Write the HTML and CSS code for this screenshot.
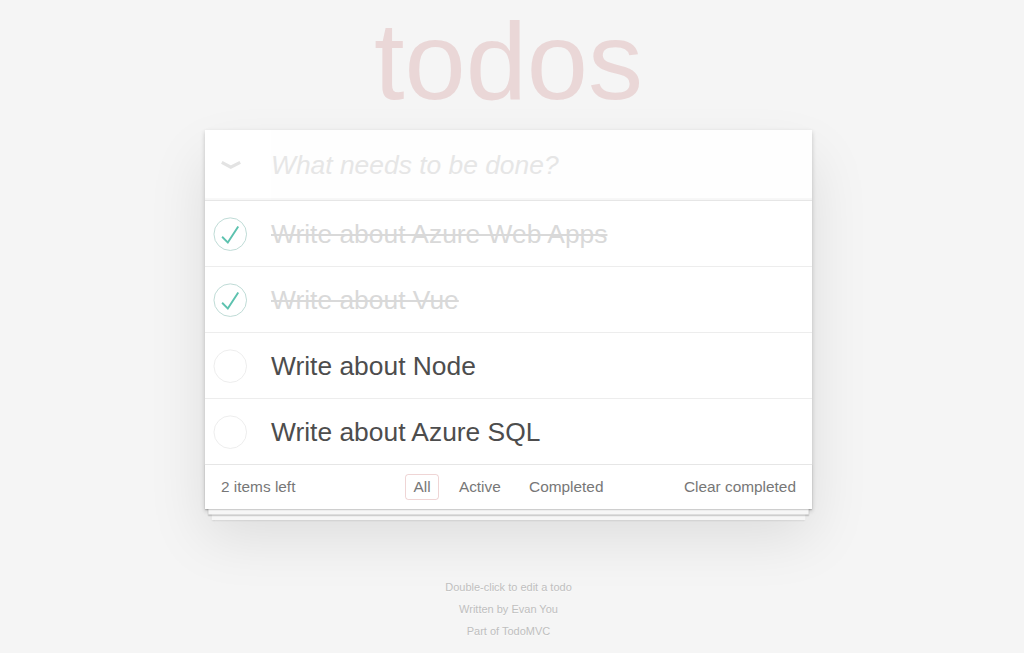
FILE: index.html
```html
<!DOCTYPE html>
<html lang="en">
<head>
<meta charset="utf-8">
<title>Vue.js • TodoMVC</title>
<link rel="stylesheet" href="styles.css">
</head>
<body>
<div class="page">
  <h1 class="title">todos</h1>
  <section class="todoapp">
    <header class="header">
      <label class="toggle-all" aria-label="Mark all as complete">
        <svg width="22" height="10" viewBox="0 0 22 10"><polyline points="1.8,2.4 10.8,7.2 20.2,2.4" fill="none" stroke="#e3e3e3" stroke-width="3.2"/></svg>
      </label>
      <input class="new-todo" placeholder="What needs to be done?" autocomplete="off">
    </header>
    <section class="main">
      <ul class="todo-list">
        <li class="todo completed">
          <span class="toggle"><svg width="44" height="44" viewBox="-10 -18 100 135"><circle cx="50" cy="50" r="50" fill="none" stroke="#bddad5" stroke-width="3"/><path fill="#5dc2af" d="M72 25L42 71 27 56l-4 4 20 20 34-52z"/></svg></span>
          <label class="todo-label">Write about Azure Web Apps</label>
        </li>
        <li class="todo completed">
          <span class="toggle"><svg width="44" height="44" viewBox="-10 -18 100 135"><circle cx="50" cy="50" r="50" fill="none" stroke="#bddad5" stroke-width="3"/><path fill="#5dc2af" d="M72 25L42 71 27 56l-4 4 20 20 34-52z"/></svg></span>
          <label class="todo-label">Write about Vue</label>
        </li>
        <li class="todo">
          <span class="toggle"><svg width="44" height="44" viewBox="-10 -18 100 135"><circle cx="50" cy="50" r="50" fill="none" stroke="#ededed" stroke-width="3"/></svg></span>
          <label class="todo-label">Write about Node</label>
        </li>
        <li class="todo">
          <span class="toggle"><svg width="44" height="44" viewBox="-10 -18 100 135"><circle cx="50" cy="50" r="50" fill="none" stroke="#ededed" stroke-width="3"/></svg></span>
          <label class="todo-label">Write about Azure SQL</label>
        </li>
      </ul>
    </section>
    <footer class="footer">
      <span class="todo-count"><strong>2</strong> items left</span>
      <ul class="filters">
        <li><a class="filter selected">All</a></li>
        <li><a class="filter">Active</a></li>
        <li><a class="filter">Completed</a></li>
      </ul>
      <button class="clear-completed">Clear completed</button>
    </footer>
  </section>
  <footer class="info">
    <p>Double-click to edit a todo</p>
    <p>Written by Evan You</p>
    <p>Part of TodoMVC</p>
  </footer>
</div>
</body>
</html>
```

FILE: styles.css
```css
html, body {
  margin: 0;
  padding: 0;
}

body {
  background: #f5f5f5;
  color: #4d4d4d;
  font-family: "Liberation Sans", Arial, Helvetica, sans-serif;
  font-weight: 300;
  line-height: 1.4em;
  padding-right: 7px;
}

.page {
  width: 607px;
  margin: 0 auto;
}

.title {
  margin: 0 0 9px 0;
  font-size: 110px;
  line-height: 121px;
  height: 121px;
  font-weight: 100;
  text-align: center;
  color: rgba(175, 47, 47, 0.15);
}

.todoapp {
  background: #fff;
  box-shadow: 0 2.2px 4.4px 0 rgba(0, 0, 0, 0.2), 0 27.5px 55px 0 rgba(0, 0, 0, 0.1);
}

.header {
  display: flex;
  align-items: center;
  height: 70px;
  box-shadow: inset 0 -2px 1px rgba(0, 0, 0, 0.03);
}

.toggle-all {
  flex: 0 0 66px;
  box-sizing: border-box;
  padding-left: 15px;
  display: flex;
  align-items: center;
  height: 100%;
}

.toggle-all svg {
  display: block;
}

.new-todo {
  flex: 1;
  min-width: 0;
  height: 100%;
  box-sizing: border-box;
  margin: 0;
  padding: 0 16px 0 0;
  border: none;
  outline: none;
  background: rgba(0, 0, 0, 0.003);
  font-family: inherit;
  font-size: 26.4px;
  font-weight: 300;
  color: #4d4d4d;
}

.new-todo::placeholder {
  font-style: italic;
  font-weight: 300;
  color: #e6e6e6;
}

.main {
  border-top: 1px solid #e6e6e6;
}

.todo-list {
  margin: 0;
  padding: 0;
  list-style: none;
}

.todo {
  display: flex;
  align-items: center;
  height: 65px;
  border-bottom: 1px solid #ededed;
  font-size: 26.4px;
}

.todo:last-child {
  border-bottom: none;
}

.toggle {
  flex: 0 0 44px;
  height: 44px;
}

.toggle svg {
  display: block;
}

.todo-label {
  flex: 1;
  margin-left: 22px;
  padding: 17px 16px 16px 0;
  line-height: 32px;
  word-break: break-all;
}

.todo.completed .todo-label {
  color: #d9d9d9;
  text-decoration: line-through;
}

.footer {
  display: grid;
  grid-template-columns: 1fr auto 1fr;
  align-items: center;
  height: 44px;
  padding: 0 16px;
  border-top: 1px solid #e6e6e6;
  background: #fff;
  color: #777;
  font-size: 15.4px;
  line-height: 22px;
  box-shadow: 0 1.1px 1.1px rgba(0, 0, 0, 0.2),
              0 8.8px 0 -3.3px #f6f6f6,
              0 9.9px 1.1px -3.3px rgba(0, 0, 0, 0.2),
              0 17.6px 0 -6.6px #f6f6f6,
              0 18.7px 2.2px -6.6px rgba(0, 0, 0, 0.2);
}

.todo-count strong {
  font-weight: 300;
}

.filters {
  display: flex;
  gap: 4.3px;
  margin: 0;
  padding: 0;
  list-style: none;
}

.filter {
  display: block;
  margin: 3.3px;
  padding: 3px 7.7px 4px;
  line-height: 17px;
  border: 1px solid transparent;
  border-radius: 3.3px;
  color: inherit;
  text-decoration: none;
}

.filter.selected {
  border-color: rgba(175, 47, 47, 0.2);
}

.clear-completed {
  justify-self: end;
  margin: 0;
  padding: 0;
  border: 0;
  background: none;
  font-family: inherit;
  font-size: 15.4px;
  font-weight: 300;
  line-height: 22px;
  color: inherit;
}

.info {
  margin-top: 73px;
  color: #bfbfbf;
  font-size: 11px;
  text-align: center;
  text-shadow: 0 1px 0 rgba(255, 255, 255, 0.5);
}

.info p {
  margin: 11px 0;
  line-height: 1;
}
```
